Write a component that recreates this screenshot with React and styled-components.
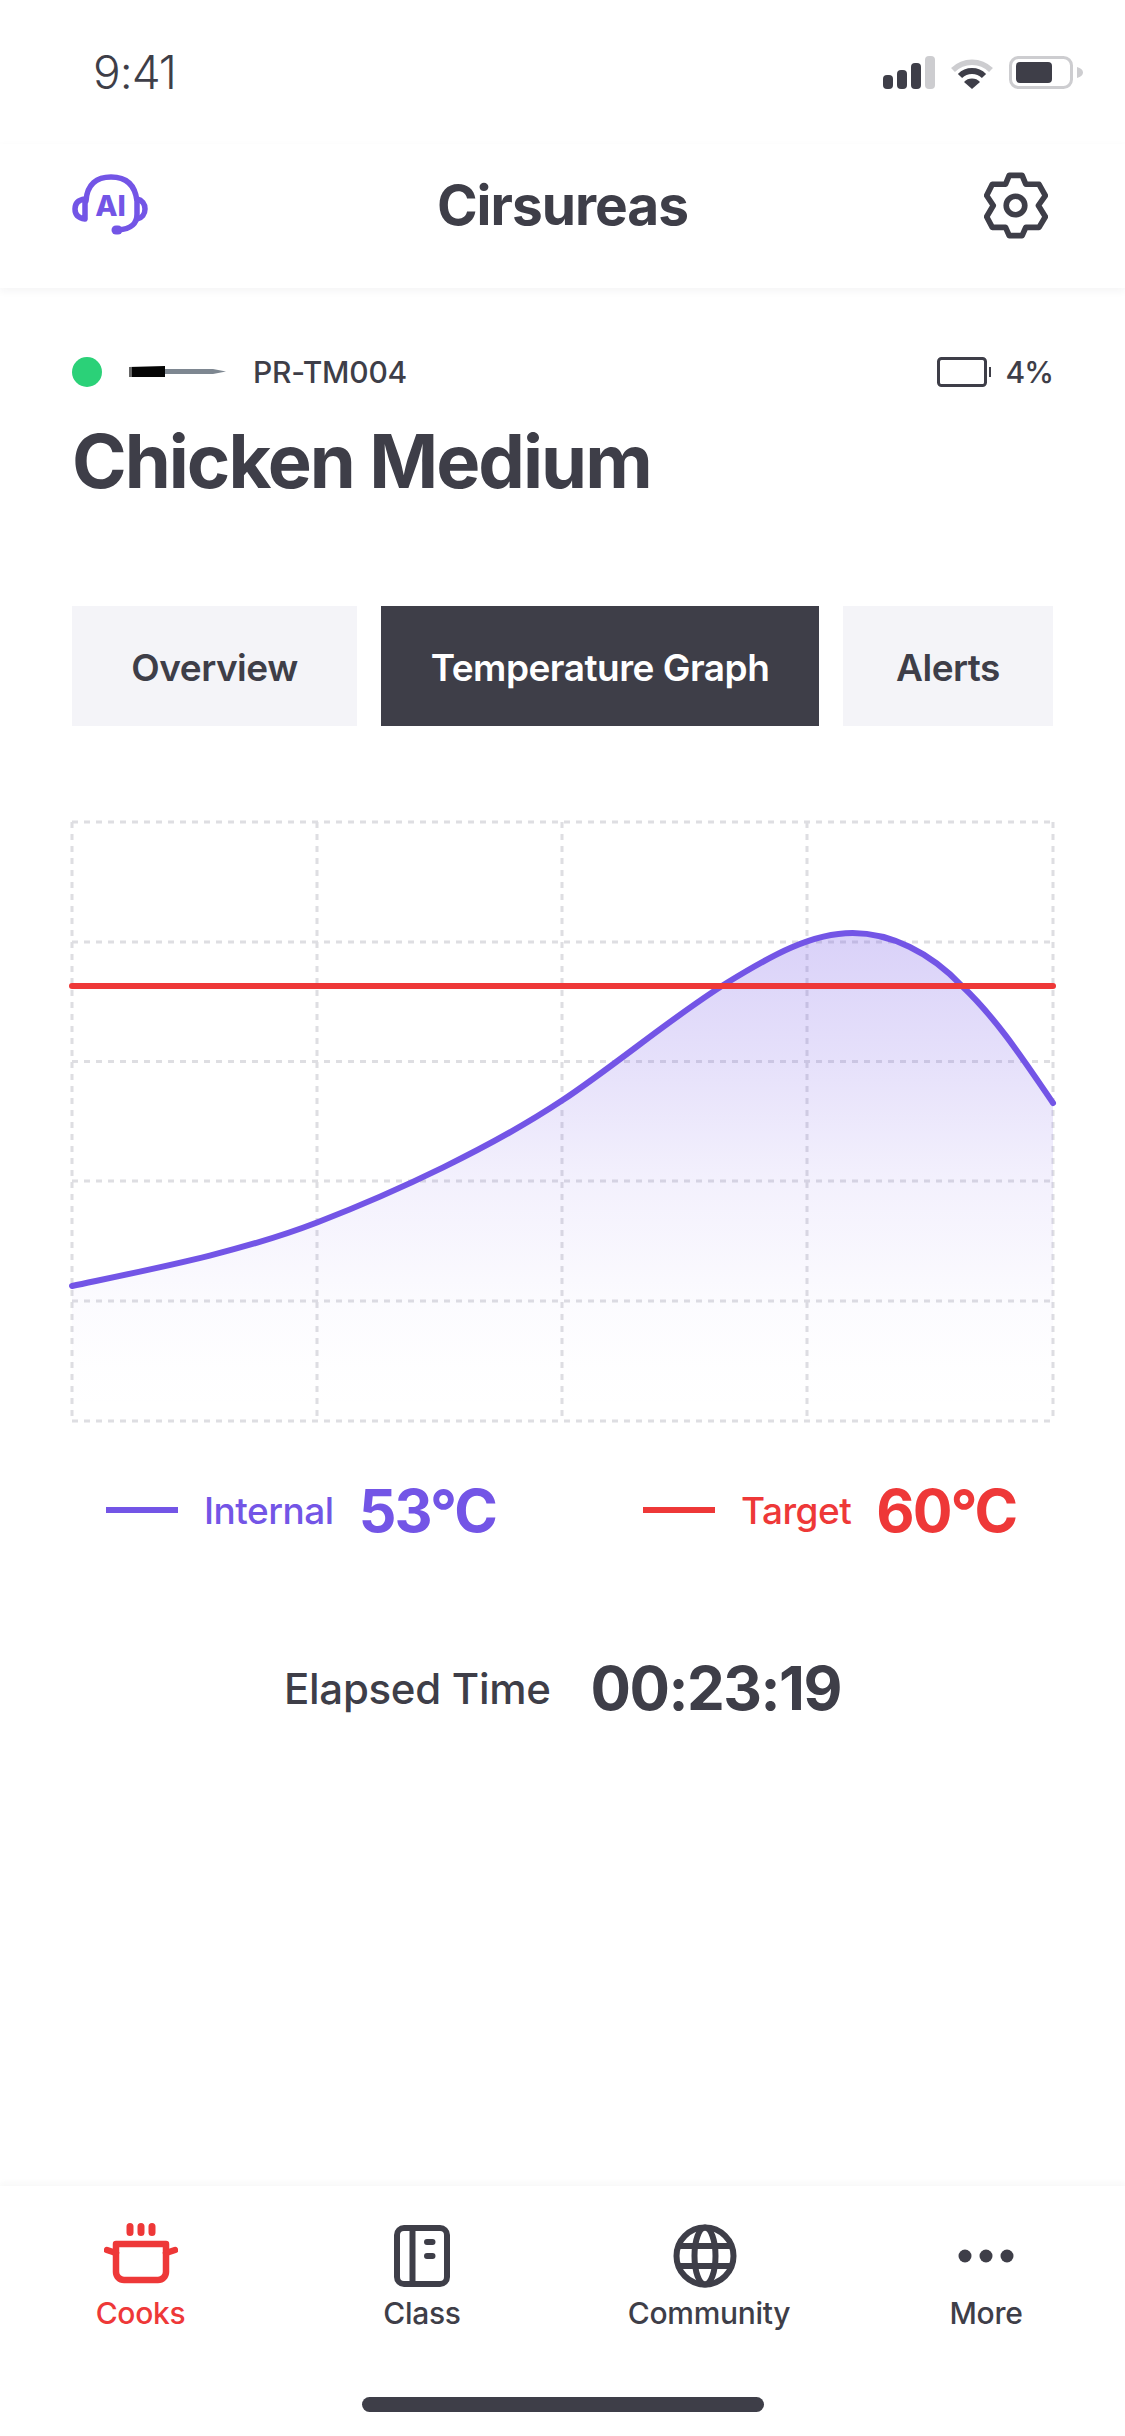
import React from "react";
import styled, { createGlobalStyle } from "styled-components";

const ink = "#3e3e48";
const violet = "#7355e6";
const red = "#ee3838";

const GlobalStyle = createGlobalStyle`
  html, body {
    margin: 0;
    padding: 0;
    background: #ffffff;
  }
  * {
    box-sizing: border-box;
  }
`;

const Screen = styled.div`
  width: 1125px;
  height: 2436px;
  display: flex;
  flex-direction: column;
  background: #ffffff;
  color: ${ink};
  font-family: "Inter", "Noto Sans", sans-serif;
  overflow: hidden;
`;

const StatusBar = styled.div`
  height: 144px;
  flex: none;
  display: flex;
  align-items: center;
  justify-content: space-between;
  padding: 0 42px 0 93px;
`;

const Clock = styled.span`
  font-size: 46px;
  font-weight: 300;
  letter-spacing: -1px;
`;

const StatusIcons = styled.div`
  display: flex;
  align-items: center;
  gap: 16px;
`;

const Header = styled.header`
  height: 144px;
  flex: none;
  display: grid;
  grid-template-columns: 1fr auto 1fr;
  align-items: center;
  padding: 0 72px 22px;
  box-shadow: 0 3px 8px rgba(40, 40, 60, 0.05);
`;

const HeaderTitle = styled.h1`
  margin: 0;
  font-size: 55px;
  font-weight: 700;
  letter-spacing: -1px;
  line-height: 64px;
`;

const HeaderSide = styled.div`
  display: flex;
  justify-content: ${(p) => (p.$end ? "flex-end" : "flex-start")};
  padding-right: ${(p) => (p.$end ? "5px" : "0")};
`;

const Main = styled.main`
  flex: 1;
  display: flex;
  flex-direction: column;
  padding: 69px 72px 0;
`;

const ProbeRow = styled.div`
  display: flex;
  align-items: center;
  height: 30px;
`;

const StatusDot = styled.span`
  width: 30px;
  height: 30px;
  border-radius: 50%;
  background: #2bd178;
  margin-right: 27px;
`;

const ProbeName = styled.span`
  margin-left: 26px;
  font-size: 30px;
  font-weight: 500;
  letter-spacing: -0.2px;
`;

const ProbeBattery = styled.div`
  margin-left: auto;
  display: flex;
  align-items: center;
  gap: 15px;
  font-size: 30px;
  font-weight: 500;
  letter-spacing: -1px;
`;

const CookTitle = styled.h2`
  margin: 29px 0 0;
  font-size: 74px;
  font-weight: 700;
  line-height: 90px;
  letter-spacing: -2px;
`;

const Tabs = styled.div`
  margin-top: 100px;
  display: grid;
  grid-template-columns: 285px 438px 210px;
  gap: 24px;
`;

const Tab = styled.div`
  height: 120px;
  display: flex;
  align-items: center;
  justify-content: center;
  padding-top: 2px;
  font-size: 37px;
  font-weight: 600;
  letter-spacing: -0.5px;
  background: ${(p) => (p.$active ? ink : "#f4f4f8")};
  color: ${(p) => (p.$active ? "#ffffff" : ink)};
`;

const ChartSvg = styled.svg`
  display: block;
  margin-top: 96px;
  overflow: visible;
`;

const Legend = styled.div`
  margin-top: 57px;
  padding-left: 34px;
  display: grid;
  grid-template-columns: 537px 1fr;
`;

const LegendItem = styled.div`
  display: flex;
  align-items: center;
  height: 62px;
  color: ${(p) => p.$color};
`;

const LegendLine = styled.span`
  width: 72px;
  height: 6px;
  background: ${(p) => p.$color};
  margin-right: 26px;
`;

const LegendLabel = styled.span`
  font-size: 37px;
  font-weight: 500;
  letter-spacing: -0.5px;
  margin-right: 25px;
`;

const LegendValue = styled.span`
  font-size: 59px;
  font-weight: 700;
  letter-spacing: -2px;
`;

const Elapsed = styled.div`
  margin-top: 116px;
  height: 62px;
  display: flex;
  align-items: center;
  justify-content: center;
  gap: 40px;
`;

const ElapsedLabel = styled.span`
  font-size: 42px;
  font-weight: 500;
  letter-spacing: -0.3px;
`;

const ElapsedValue = styled.span`
  font-size: 60px;
  font-weight: 700;
  letter-spacing: -1.5px;
`;

const BottomNav = styled.nav`
  height: 250px;
  flex: none;
  display: flex;
  flex-direction: column;
  justify-content: space-between;
  padding: 37px 0 24px;
  box-shadow: 0 -3px 6px rgba(40, 40, 60, 0.04);
`;

const NavItems = styled.div`
  display: grid;
  grid-template-columns: 281px 282px 284px 278px;
`;

const NavItem = styled.div`
  display: flex;
  flex-direction: column;
  align-items: center;
  color: ${(p) => (p.$active ? red : ink)};
`;

const NavIcon = styled.div`
  height: 66px;
  display: flex;
  align-items: center;
  justify-content: center;
`;

const NavLabel = styled.span`
  margin-top: 4px;
  padding-left: ${(p) => p.$pad || 0}px;
  font-size: 30px;
  line-height: 40px;
  font-weight: 500;
  letter-spacing: -0.3px;
`;

const HomeBar = styled.div`
  width: 402px;
  height: 15px;
  border-radius: 8px;
  background: ${ink};
  margin: 0 auto;
`;

const SignalIcon = () => (
  <svg width="52" height="33" viewBox="0 0 52 33">
    <rect x="0" y="19" width="10" height="14" rx="4" fill={ink} />
    <rect x="14" y="14" width="10" height="19" rx="4" fill={ink} />
    <rect x="28" y="7" width="10" height="26" rx="4" fill={ink} />
    <rect x="42" y="0" width="10" height="33" rx="4" fill="#cdcdd0" />
  </svg>
);

const WifiIcon = () => (
  <svg width="42" height="33" viewBox="0 0 42 33">
    <path d="M2 14 A27 27 0 0 1 40 14" fill="none" stroke="#cdcdd0" strokeWidth="5.5" />
    <path d="M9 20 A17 17 0 0 1 33 20" fill="none" stroke={ink} strokeWidth="6" />
    <path d="M21 33 L13 26 A11 11 0 0 1 29 26 Z" fill={ink} />
  </svg>
);

const BatteryIcon = () => (
  <svg width="74" height="33" viewBox="0 0 74 33">
    <rect x="1.5" y="1.5" width="61" height="30" rx="8" fill="none" stroke="#cdcdd0" strokeWidth="3" />
    <rect x="7" y="6" width="36" height="21" rx="4" fill={ink} />
    <path d="M68 11 C72 12 74 14 74 16.5 C74 19 72 21 68 22 Z" fill="#cdcdd0" />
  </svg>
);

const HeadsetIcon = () => (
  <svg width="76" height="62" viewBox="0 0 76 62" fill="none" stroke={violet} strokeWidth="5.5" strokeLinecap="round">
    <path d="M14 27 C15 10 25 3 39 3 C53 3 63 10 65 27 L65 40 C65 50 59 55 46 56" />
    <path d="M46 56 L44 56" strokeWidth="9" />
    <path d="M13 25 C6 26 3 30 3 35 C3 40 6 44 13 45 Z" strokeLinejoin="round" />
    <path d="M65 25 C70 26 73 30 73 35 C73 40 70 44 65 45" strokeLinejoin="round" />
    <text x="38.5" y="42" textAnchor="middle" fontFamily="Inter, sans-serif" fontWeight="800" fontSize="29" fill={violet} stroke="none">AI</text>
  </svg>
);

const GearIcon = () => (
  <svg width="64" height="67" viewBox="42 32 193 200" fill="none" stroke={ink} strokeWidth="17" strokeLinejoin="round">
    <path d="M118 41 H157 L168 68 H208 L227 102 L206 132 L227 166 L208 198 H168 L157 223 H118 L107 198 H67 L50 166 L70 132 L50 102 L67 68 H107 Z" />
    <circle cx="137" cy="132" r="28" />
  </svg>
);

const ProbeIcon = () => (
  <svg width="98" height="12" viewBox="0 0 98 12">
    <path d="M0 1 L36 0 L36 11 L0 11 Z" fill="#050505" />
    <rect x="0" y="1" width="3" height="10" fill="#666" />
    <path d="M36 3 L84 3 L97 5.5 L84 8 L36 8 Z" fill="#7e8791" />
  </svg>
);

const SmallBattery = () => (
  <svg width="54" height="30" viewBox="0 0 54 30">
    <rect x="1.5" y="1.5" width="47" height="27" rx="3" fill="none" stroke={ink} strokeWidth="3" />
    <rect x="52" y="10" width="2" height="10" fill={ink} />
  </svg>
);

const PotIcon = () => (
  <svg width="74" height="66" viewBox="0 0 74 66" fill="none" stroke="currentColor" strokeWidth="6.5" strokeLinecap="round" strokeLinejoin="round">
    <path d="M12 21 H62 V49 A8 8 0 0 1 54 57 H20 A8 8 0 0 1 12 49 Z" />
    <path d="M3 27 L12 30 M71 27 L62 30" />
    <path d="M26 3.5 V9.5 M37 3.5 V9.5 M48 3.5 V9.5" strokeWidth="7" />
  </svg>
);

const BookIcon = () => (
  <svg width="56" height="62" viewBox="0 0 56 62" fill="none" stroke="currentColor" strokeWidth="6" strokeLinecap="round" strokeLinejoin="round">
    <rect x="3" y="3" width="50" height="56" rx="7" />
    <path d="M18.5 3 V59" strokeLinecap="butt" />
    <path d="M33 17 H38.5 M33 31 H38.5" />
  </svg>
);

const GlobeIcon = () => (
  <svg width="64" height="64" viewBox="0 0 64 64" fill="none" stroke="currentColor" strokeWidth="6">
    <circle cx="32" cy="32" r="28.5" />
    <ellipse cx="32" cy="32" rx="10.5" ry="28.5" />
    <path d="M5 22 H59 M5 42 H59" />
  </svg>
);

const DotsIcon = () => (
  <svg width="56" height="14" viewBox="0 0 56 14" fill="currentColor">
    <circle cx="7" cy="7" r="6.5" />
    <circle cx="28" cy="7" r="6.5" />
    <circle cx="49" cy="7" r="6.5" />
  </svg>
);

const curve =
  "M0 464 C85 446 170 429.5 245 400.5 C325 369.5 420 325 490 278.6 C545 242 600 195 654.6 161 C700 133 740 111 780.6 111 C818 111 858 130 890 164 C925 197 953 240 981 281";

const Chart = () => {
  const xs = [0, 245, 490, 735, 981];
  const ys = [0, 120, 239.5, 359, 479, 599];
  return (
    <ChartSvg width="981" height="600" viewBox="0 0 981 600">
      <defs>
        <linearGradient id="areaFill" x1="0" y1="111" x2="0" y2="599" gradientUnits="userSpaceOnUse">
          <stop offset="0" stopColor={violet} stopOpacity="0.27" />
          <stop offset="0.263" stopColor={violet} stopOpacity="0.18" />
          <stop offset="0.508" stopColor={violet} stopOpacity="0.085" />
          <stop offset="0.754" stopColor={violet} stopOpacity="0.025" />
          <stop offset="0.9" stopColor={violet} stopOpacity="0.005" />
          <stop offset="1" stopColor={violet} stopOpacity="0" />
        </linearGradient>
      </defs>
      {xs.map((x) => (
        <line key={x} x1={x} y1="0" x2={x} y2="599" stroke="#dedee2" strokeWidth="3" strokeDasharray="6 6" />
      ))}
      {ys.map((y) => (
        <line key={y} x1="0" y1={y} x2="981" y2={y} stroke="#dedee2" strokeWidth="3" strokeDasharray="6 6" />
      ))}
      <path d={`${curve} L981 599 L0 599 Z`} fill="url(#areaFill)" />
      <path d={curve} fill="none" stroke={violet} strokeWidth="6" strokeLinecap="round" />
      <line x1="0" y1="164" x2="981" y2="164" stroke={red} strokeWidth="6" strokeLinecap="round" />
    </ChartSvg>
  );
};

const navItems = [
  { label: "Cooks", icon: <PotIcon />, active: true },
  { label: "Class", icon: <BookIcon /> },
  { label: "Community", icon: <GlobeIcon />, pad: 8 },
  { label: "More", icon: <DotsIcon /> },
];

export default function App() {
  return (
    <>
      <GlobalStyle />
      <Screen>
        <StatusBar>
          <Clock>9:41</Clock>
          <StatusIcons>
            <SignalIcon />
            <WifiIcon />
            <BatteryIcon />
          </StatusIcons>
        </StatusBar>
        <Header>
          <HeaderSide>
            <HeadsetIcon />
          </HeaderSide>
          <HeaderTitle>Cirsureas</HeaderTitle>
          <HeaderSide $end>
            <GearIcon />
          </HeaderSide>
        </Header>
        <Main>
          <ProbeRow>
            <StatusDot />
            <ProbeIcon />
            <ProbeName>PR-TM004</ProbeName>
            <ProbeBattery>
              <SmallBattery />
              4%
            </ProbeBattery>
          </ProbeRow>
          <CookTitle>Chicken Medium</CookTitle>
          <Tabs>
            <Tab>Overview</Tab>
            <Tab $active>Temperature Graph</Tab>
            <Tab>Alerts</Tab>
          </Tabs>
          <Chart />
          <Legend>
            <LegendItem $color={violet}>
              <LegendLine $color={violet} />
              <LegendLabel>Internal</LegendLabel>
              <LegendValue>53°C</LegendValue>
            </LegendItem>
            <LegendItem $color={red}>
              <LegendLine $color={red} />
              <LegendLabel>Target</LegendLabel>
              <LegendValue>60°C</LegendValue>
            </LegendItem>
          </Legend>
          <Elapsed>
            <ElapsedLabel>Elapsed Time</ElapsedLabel>
            <ElapsedValue>00:23:19</ElapsedValue>
          </Elapsed>
        </Main>
        <BottomNav>
          <NavItems>
            {navItems.map((item) => (
              <NavItem key={item.label} $active={item.active}>
                <NavIcon>{item.icon}</NavIcon>
                <NavLabel $pad={item.pad}>{item.label}</NavLabel>
              </NavItem>
            ))}
          </NavItems>
          <HomeBar />
        </BottomNav>
      </Screen>
    </>
  );
}
